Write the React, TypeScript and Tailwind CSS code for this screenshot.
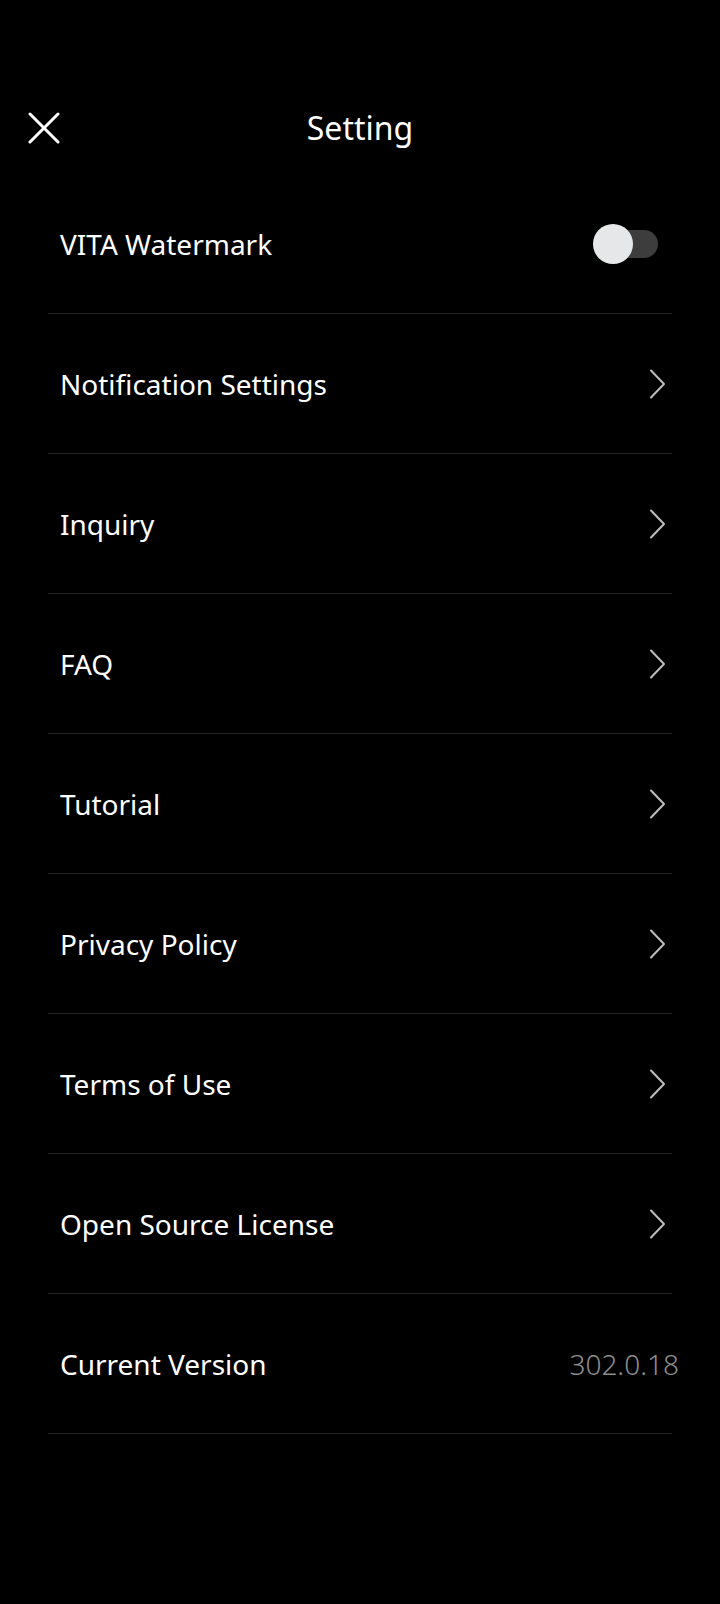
import React from "react";

const rows: { label: string; type: "toggle" | "chevron" | "version" }[] = [
  { label: "VITA Watermark", type: "toggle" },
  { label: "Notification Settings", type: "chevron" },
  { label: "Inquiry", type: "chevron" },
  { label: "FAQ", type: "chevron" },
  { label: "Tutorial", type: "chevron" },
  { label: "Privacy Policy", type: "chevron" },
  { label: "Terms of Use", type: "chevron" },
  { label: "Open Source License", type: "chevron" },
  { label: "Current Version", type: "version" },
];

function Chevron() {
  return (
    <svg width="17" height="30" viewBox="0 0 17 30" className="mr-[6px]">
      <path d="M2 1.5 L15 15 L2 28.5" fill="none" stroke="#bdbdbd" strokeWidth="2" strokeLinecap="round" strokeLinejoin="round" />
    </svg>
  );
}

function Toggle() {
  return (
    <div className="relative w-[65px] h-[40px] mr-[14px] flex items-center">
      <div className="absolute right-0 w-[52px] h-[28px] rounded-full bg-[#3d3d3d]" />
      <div className="absolute left-0 w-[40px] h-[40px] rounded-full bg-[#e6e7e8]" />
    </div>
  );
}

export default function App() {
  return (
    <div
      className="w-[720px] min-h-[1604px] bg-black text-white"
      style={{ fontFamily: "'Noto Sans', Roboto, sans-serif" }}
    >
      <div className="pt-[88px] h-[168px] grid grid-cols-[1fr_auto_1fr] items-center">
        <div className="pl-[28px] flex items-center">
          <svg width="32" height="32" viewBox="0 0 32 32">
            <path d="M2 2 L30 30 M30 2 L2 30" stroke="#ffffff" strokeWidth="3" strokeLinecap="round" />
          </svg>
        </div>
        <div className="text-[32px] leading-none text-white">Setting</div>
        <div />
      </div>
      <div className="mt-[6px] px-[48px]">
        {rows.map((r) => (
          <div
            key={r.label}
            className="h-[140px] border-b border-[#242424] flex items-center justify-between pl-[12px]"
          >
            <span className="text-[28px] leading-none text-white">{r.label}</span>
            {r.type === "chevron" && <Chevron />}
            {r.type === "toggle" && <Toggle />}
            {r.type === "version" && (
              <span className="text-[28px] leading-none font-light text-[#8e8e8e] mr-[-7px]">302.0.18</span>
            )}
          </div>
        ))}
      </div>
    </div>
  );
}
